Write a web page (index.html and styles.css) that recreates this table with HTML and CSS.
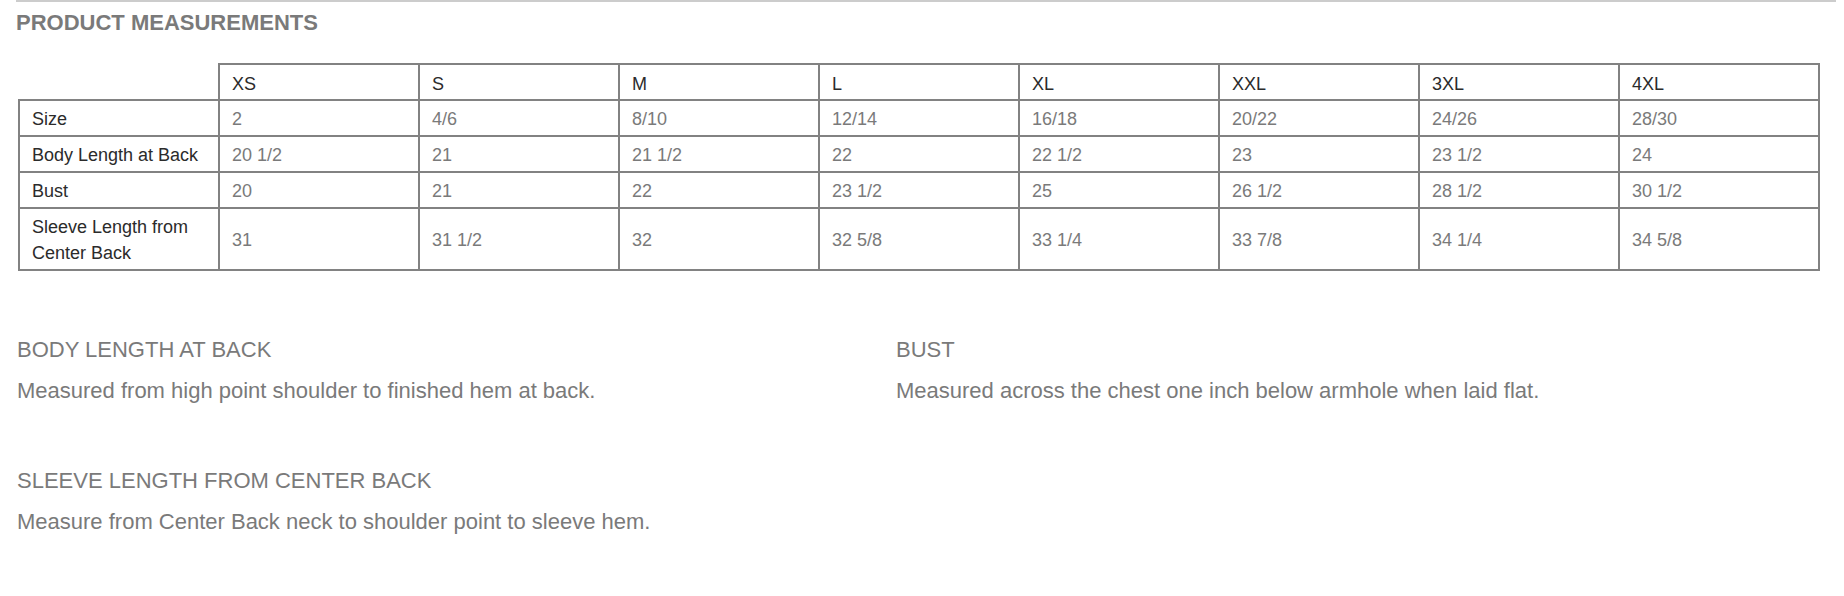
FILE: index.html
```html
<!DOCTYPE html>
<html lang="en">
<head>
<meta charset="utf-8">
<title>Product Measurements</title>
<link rel="stylesheet" href="styles.css">
</head>
<body>
<div class="page">
  <h2 class="title">PRODUCT MEASUREMENTS</h2>
  <table class="sizes">
    <colgroup>
      <col class="c"><col class="c"><col class="c"><col class="c"><col class="c"><col class="c"><col class="c"><col class="c"><col class="c">
    </colgroup>
    <thead>
      <tr>
        <th class="corner"></th>
        <th>XS</th><th>S</th><th>M</th><th>L</th><th>XL</th><th>XXL</th><th>3XL</th><th>4XL</th>
      </tr>
    </thead>
    <tbody>
      <tr>
        <th>Size</th>
        <td>2</td><td>4/6</td><td>8/10</td><td>12/14</td><td>16/18</td><td>20/22</td><td>24/26</td><td>28/30</td>
      </tr>
      <tr>
        <th>Body Length at Back</th>
        <td>20 1/2</td><td>21</td><td>21 1/2</td><td>22</td><td>22 1/2</td><td>23</td><td>23 1/2</td><td>24</td>
      </tr>
      <tr>
        <th>Bust</th>
        <td>20</td><td>21</td><td>22</td><td>23 1/2</td><td>25</td><td>26 1/2</td><td>28 1/2</td><td>30 1/2</td>
      </tr>
      <tr>
        <th>Sleeve Length from Center Back</th>
        <td>31</td><td>31 1/2</td><td>32</td><td>32 5/8</td><td>33 1/4</td><td>33 7/8</td><td>34 1/4</td><td>34 5/8</td>
      </tr>
    </tbody>
  </table>
  <div class="notes">
    <div class="note">
      <h3 class="note-title">BODY LENGTH AT BACK</h3>
      <p class="note-text">Measured from high point shoulder to finished hem at back.</p>
    </div>
    <div class="note">
      <h3 class="note-title">BUST</h3>
      <p class="note-text">Measured across the chest one inch below armhole when laid flat.</p>
    </div>
    <div class="note">
      <h3 class="note-title">SLEEVE LENGTH FROM CENTER BACK</h3>
      <p class="note-text">Measure from Center Back neck to shoulder point to sleeve hem.</p>
    </div>
  </div>
</div>
</body>
</html>
```
FILE: styles.css
```css
html, body {
  margin: 0;
  padding: 0;
  background: #ffffff;
}
body {
  font-family: "Liberation Sans", Arial, Helvetica, sans-serif;
}
.page {
  margin: 0 8px 0 16px;
  border-top: 2px solid #cccccc;
}
.title {
  margin: 8px 0 0 0;
  font-size: 22px;
  line-height: 26px;
  font-weight: bold;
  color: #7a7a7a;
}
.sizes {
  margin: 27px 0 0 2px;
  width: 1802px;
  table-layout: fixed;
  border-collapse: collapse;
  font-size: 18px;
  line-height: 26px;
}
.sizes col.c {
  width: 200px;
}
.sizes th,
.sizes td {
  border: 2px solid #828282;
  padding: 5px 12px 3px 12px;
  text-align: left;
  vertical-align: middle;
}
.sizes thead th {
  padding: 6px 12px 2px 12px;
}
.sizes th {
  font-weight: normal;
  color: #2b2b2b;
}
.sizes td {
  color: #7a7a7a;
}
.sizes th.corner {
  border-top: hidden;
  border-left: hidden;
}
.notes {
  margin: 64px 0 0 1px;
  display: grid;
  grid-template-columns: 879px 1fr;
  row-gap: 60px;
}
.note-title,
.note-text {
  margin: 0;
  font-size: 22px;
  line-height: 30px;
  font-weight: normal;
  color: #7a7a7a;
}
.note-text {
  margin-top: 11px;
}
```
